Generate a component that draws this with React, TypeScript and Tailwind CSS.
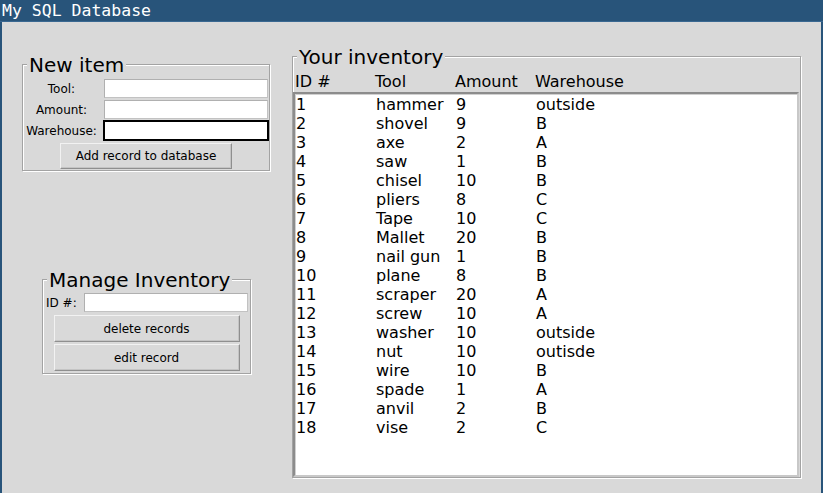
import React from "react";

const rows: [string, string, string, string][] = [
  ["1", "hammer", "9", "outside"],
  ["2", "shovel", "9", "B"],
  ["3", "axe", "2", "A"],
  ["4", "saw", "1", "B"],
  ["5", "chisel", "10", "B"],
  ["6", "pliers", "8", "C"],
  ["7", "Tape", "10", "C"],
  ["8", "Mallet", "20", "B"],
  ["9", "nail gun", "1", "B"],
  ["10", "plane", "8", "B"],
  ["11", "scraper", "20", "A"],
  ["12", "screw", "10", "A"],
  ["13", "washer", "10", "outside"],
  ["14", "nut", "10", "outisde"],
  ["15", "wire", "10", "B"],
  ["16", "spade", "1", "A"],
  ["17", "anvil", "2", "B"],
  ["18", "vise", "2", "C"],
];

const font = "font-['DejaVu_Sans',sans-serif]";

function Entry({ focused = false, w }: { focused?: boolean; w: string }) {
  return (
    <div className={`h-[21px] ${w} p-px`}>
      <div
        className={
          focused
            ? "bg-white border-2 border-black -m-px h-[21px] w-[calc(100%+2px)]"
            : "h-full w-full bg-white border border-[#c2c2c2] border-t-[#b0b0b0] border-l-[#b0b0b0]"
        }
      />
    </div>
  );
}

function TkButton({ label, w, h }: { label: string; w: string; h: string }) {
  return (
    <div
      className={`${w} ${h} mx-auto flex items-center justify-center bg-[#d9d9d9] border border-t-[#f2f2f2] border-l-[#f2f2f2] border-b-[#8f8f8f] border-r-[#8f8f8f] shadow-[inset_-1px_-1px_0_#c4c4c4] text-[12px] text-black`}
    >
      {label}
    </div>
  );
}

function Legend({ children }: { children: React.ReactNode }) {
  return (
    <legend className="ml-[4px] px-[2px] pt-[2px] text-[20px] leading-[18px] bg-[#d9d9d9] text-black">
      {children}
    </legend>
  );
}

const frame =
  "border border-[#a3a3a3] shadow-[1px_1px_0_white,inset_1px_1px_0_white] m-0";

export default function App() {
  return (
    <div className={`w-[823px] h-[493px] flex flex-col bg-[#d9d9d9] overflow-hidden ${font}`}>
      <div className="h-[22px] shrink-0 bg-[#28547a] border-b border-[#3a6891] text-white font-['DejaVu_Sans_Mono',monospace] text-[16.5px] leading-[22px] pl-[2px]">
        My SQL Database
      </div>
      <div className="flex-1 flex items-start border-x-2 border-[#28547a]">
        {/* left column */}
        <div className="w-[290px] shrink-0 flex flex-col items-start">
          <fieldset className={`${frame} ml-[20px] mt-[32px] w-[248px] pt-[4px] pb-[1px]`}>
            <Legend>New item</Legend>
            <div className="grid grid-cols-[77px_166px] gap-x-[3px] items-center text-[12px] text-black">
              <div className="text-center">Tool:</div>
              <Entry w="w-[166px]" />
              <div className="text-center">Amount:</div>
              <Entry w="w-[166px]" />
              <div className="text-center">Warehouse:</div>
              <Entry w="w-[166px]" focused />
            </div>
            <div className="mt-[2px]">
              <TkButton label="Add record to database" w="w-[172px]" h="h-[26px]" />
            </div>
          </fieldset>

          <fieldset className={`${frame} ml-[40px] mt-[98px] w-[209px] pt-[3px] pb-[2px]`}>
            <Legend>Manage Inventory</Legend>
            <div className="flex items-center text-[12px] text-black">
              <div className="w-[40px] pl-[3px]">ID #:</div>
              <Entry w="w-[166px]" />
            </div>
            <div className="mt-[2px] flex flex-col gap-[2px]">
              <TkButton label="delete records" w="w-[186px]" h="h-[27px]" />
              <TkButton label="edit record" w="w-[186px]" h="h-[27px]" />
            </div>
          </fieldset>
        </div>

        {/* right frame */}
        <fieldset className={`${frame} mt-[24px] w-[509px] pt-[6px]`}>
          <Legend>Your inventory</Legend>
          <div className="grid grid-cols-[80px_80px_80px_1fr] pl-[2px] text-[16px] leading-[20px] text-black">
            <div>ID #</div>
            <div>Tool</div>
            <div>Amount</div>
            <div>Warehouse</div>
          </div>
          <div className="w-[506px] h-[385px] bg-white border-2 border-[#8c8c8c] border-b-[#c8c8c8] border-r-[#c8c8c8] shadow-[inset_1px_1px_0_#d0d0d0] pl-px pt-px text-[16px] leading-[19px] text-black">
            {rows.map((r) => (
              <div key={r[0]} className="grid grid-cols-[80px_80px_80px_1fr] h-[19px] whitespace-nowrap">
                <div>{r[0]}</div>
                <div>{r[1]}</div>
                <div>{r[2]}</div>
                <div>{r[3]}</div>
              </div>
            ))}
          </div>
        </fieldset>
      </div>
    </div>
  );
}
